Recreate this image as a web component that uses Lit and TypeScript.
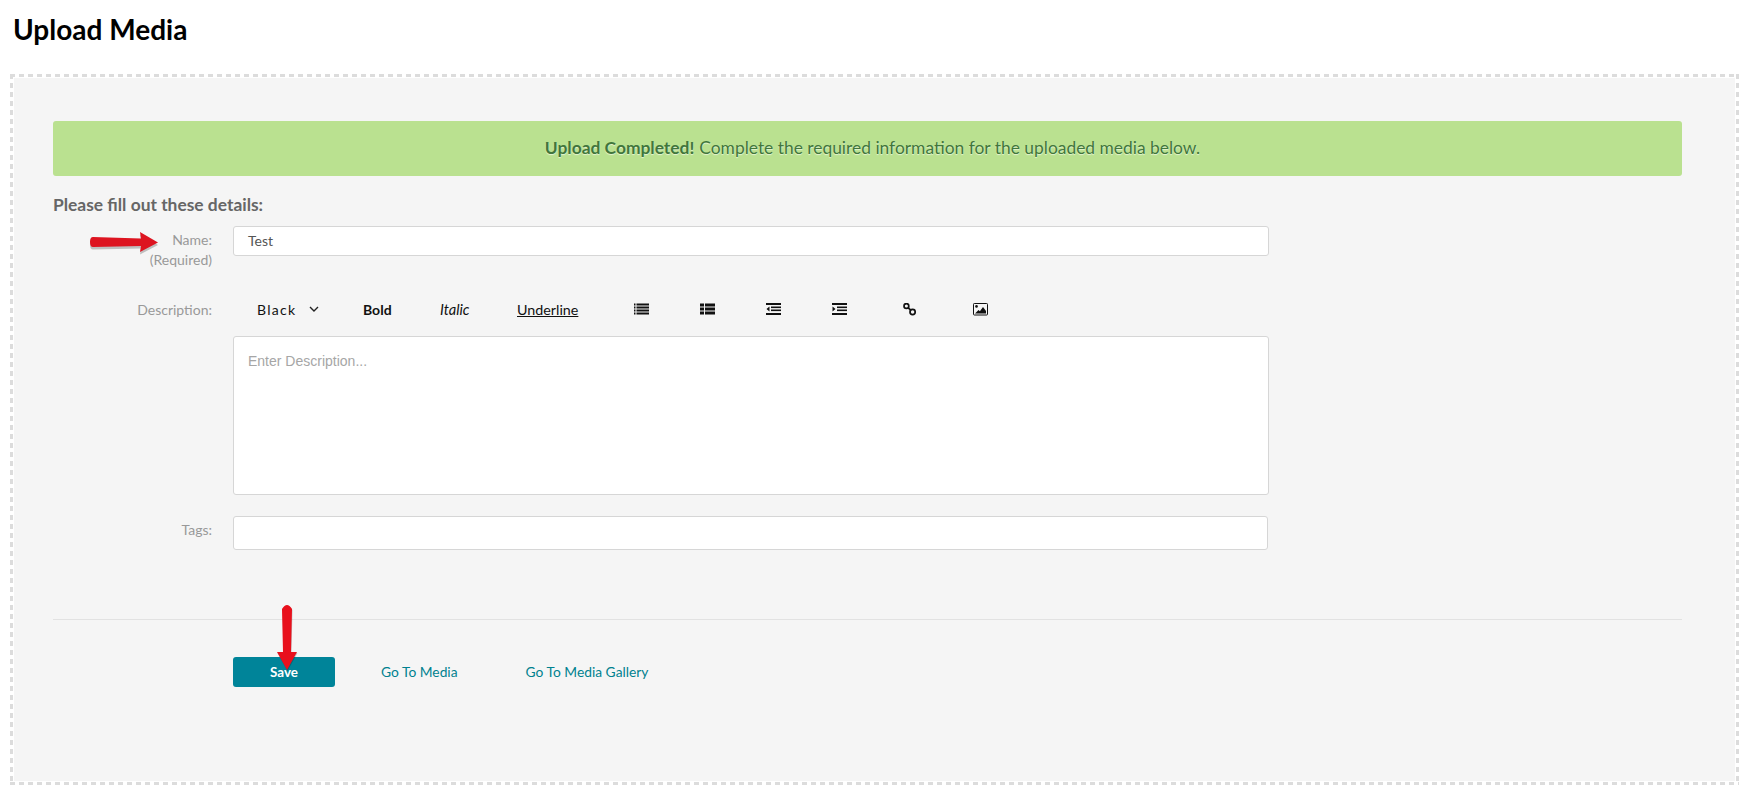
import { LitElement, html, css, svg } from "lit";
import { customElement } from "lit/decorators.js";

const icon = (body: unknown, cls = "") => html`<svg class="ico ${cls}" viewBox="0 0 15 13" width="15" height="13">${body}</svg>`;

const icons = [
  icon(svg`${[0.5, 3.5, 6.5, 9.5].map((y) => svg`<rect x="0" y=${y} width="1.5" height="2" fill="#111"/><rect x="2.5" y=${y} width="12.5" height="2" fill="#111"/>`)}`),
  icon(svg`<rect x="0" y="0.5" width="4" height="3" fill="#111"/><rect x="0" y="4.5" width="4" height="3" fill="#111"/><rect x="0" y="8.5" width="4" height="3" fill="#111"/><rect x="5" y="0.5" width="10" height="3" fill="#111"/><rect x="5" y="4.5" width="10" height="3" fill="#111"/><rect x="5" y="8.5" width="10" height="3" fill="#111"/>`),
  icon(svg`<rect x="0" y="0" width="15" height="2" fill="#111"/><rect x="5" y="3.5" width="10" height="1.6" fill="#111"/><rect x="5" y="6.5" width="10" height="1.6" fill="#111"/><rect x="0" y="10" width="15" height="2" fill="#111"/><path d="M3.5 3.5v5L0.5 6z" fill="#111"/>`),
  icon(svg`<rect x="0" y="0" width="15" height="2" fill="#111"/><rect x="5" y="3.5" width="10" height="1.6" fill="#111"/><rect x="5" y="6.5" width="10" height="1.6" fill="#111"/><rect x="0" y="10" width="15" height="2" fill="#111"/><path d="M0.5 3.5v5L3.5 6z" fill="#111"/>`, "after-indent"),
  icon(svg`<circle cx="3.4" cy="3" r="2.4" fill="none" stroke="#111" stroke-width="1.7"/><circle cx="9.6" cy="9" r="2.6" fill="none" stroke="#111" stroke-width="1.7"/><path d="M5 4.6L8 7.3" stroke="#111" stroke-width="1.8"/>`, "after-link"),
  icon(svg`<rect x="0.5" y="0.5" width="14" height="11.5" rx="0.8" fill="none" stroke="#111"/><circle cx="3.5" cy="3.4" r="1.3" fill="#111"/><path d="M2 10.5L5.5 7l1.4 1.2L10 4l3 4v2.5z" fill="#111"/>`),
];

@customElement("app-root")
export class AppRoot extends LitElement {
  static styles = css`
    :host {
      display: block;
      height: 788px;
      background: #fff;
      font-family: Lato, "Liberation Sans", sans-serif;
      overflow: hidden;
    }
    h1 {
      margin: 0;
      padding: 13px 0 0 13px;
      height: 74px;
      box-sizing: border-box;
      font-size: 28px;
      line-height: 32px;
      font-weight: 700;
      color: #000;
    }
    .panel {
      position: relative;
      box-sizing: border-box;
      margin-left: 10px;
      width: 1729px;
      height: 711px;
      padding: 4px;
      background:
        repeating-linear-gradient(90deg, #dcdcdc 0 5px, transparent 5px 9px) top left / 100% 3px no-repeat,
        repeating-linear-gradient(90deg, #dcdcdc 0 5px, transparent 5px 9px) bottom left / 100% 3px no-repeat,
        repeating-linear-gradient(180deg, #dcdcdc 0 5px, transparent 5px 9px) top left / 3px 100% no-repeat,
        repeating-linear-gradient(180deg, #dcdcdc 0 5px, transparent 5px 9px) top right / 3px 100% no-repeat;
    }
    .body {
      height: 100%;
      box-sizing: border-box;
      background: #f5f5f5;
      padding: 43px 53px 0 39px;
    }
    .banner {
      height: 55px;
      box-sizing: border-box;
      border-radius: 3px;
      background: #bae190;
      display: flex;
      align-items: center;
      justify-content: center;
      padding: 0 0 2px 10px;
      font-size: 17.4px;
      color: #41763c;
      text-shadow: 0 1px 1px #e6f5d4;
    }
    .banner b { font-weight: 700; margin-right: 5px; }
    h2 {
      margin: 19px 0 0;
      font-size: 17.4px;
      line-height: 20px;
      font-weight: 700;
      color: #666;
    }
    .grid {
      display: grid;
      grid-template-columns: 159px 1036px;
      column-gap: 21px;
      margin-top: 11px;
    }
    .label {
      font-size: 14px;
      line-height: 20px;
      color: #999;
      text-align: right;
    }
    .input {
      box-sizing: border-box;
      background: #fff;
      border: 1px solid #d6d6d6;
      border-radius: 3px;
      font-size: 14px;
      color: #555;
      display: flex;
      align-items: center;
      padding-left: 14px;
    }
    .name { height: 30px; padding-bottom: 2px; }
    .name-label { padding-top: 4px; height: 66px; box-sizing: border-box; }
    .desc-label { padding-top: 8px; }
    .toolbar {
      height: 44px;
      display: flex;
      align-items: center;
      font-size: 14px;
      color: #111;
      padding-bottom: 10px;
      box-sizing: border-box;
    }
    .color { width: 130px; padding-left: 24px; box-sizing: border-box; letter-spacing: 1.3px; display: flex; align-items: center; flex: none; }
    .color svg { margin-left: 13px; }
    .bold { font-weight: 700; width: 77px; flex: none; }
    .italic { font-style: italic; font-size: 14.6px; width: 77px; flex: none; }
    .under { text-decoration: underline; font-size: 14.3px; width: 117px; flex: none; }
    .ico { flex: none; margin-right: 51px; }
    .after-indent { margin-right: 56px; }
    .after-link { margin-right: 55px; }
    .area {
      height: 159px;
      align-items: flex-start;
      padding-top: 16px;
      color: #a6a6a6;
      font-family: "Liberation Sans", Arial, sans-serif;
      font-size: 14px;
      line-height: 16px;
    }
    .tags-label { padding-top: 25px; }
    .tags { height: 34px; width: 1035px; margin-top: 21px; }
    hr {
      border: 0;
      border-top: 1px solid #e2e2e2;
      margin: 69px 0 0;
    }
    .actions {
      display: flex;
      align-items: center;
      margin: 37px 0 0 180px;
      font-size: 13.8px;
      color: #00818f;
    }
    .save {
      width: 102px;
      height: 30px;
      border: 0;
      border-radius: 3px;
      background: #008499;
      color: #fff;
      font: 700 13.4px Lato, sans-serif;
      padding: 0;
    }
    .link1, .link2 { padding-bottom: 2px; }
    .link1 { margin-left: 46px; }
    .link2 { margin-left: 68px; }
    .arrow { position: absolute; overflow: visible; }
    .a1 { left: 79px; top: 158px; }
    .a2 { left: 266px; top: 529px; }
  `;

  render() {
    return html`
      <h1>Upload Media</h1>
      <section class="panel">
        <div class="body">
          <div class="banner"><b>Upload Completed!</b> Complete the required information for the uploaded media below.</div>
          <h2>Please fill out these details:</h2>
          <div class="grid">
            <div class="label name-label">Name:<br />(Required)</div>
            <div class="input name">Test</div>
            <div class="label desc-label">Description:</div>
            <div>
              <div class="toolbar">
                <span class="color">Black
                  <svg width="10" height="6" viewBox="0 0 10 6"><path d="M1 1l4 4 4-4" fill="none" stroke="#222" stroke-width="1.4"/></svg>
                </span>
                <span class="bold">Bold</span>
                <span class="italic">Italic</span>
                <span class="under">Underline</span>
                ${icons}
              </div>
              <div class="input area">Enter Description...</div>
            </div>
            <div class="label tags-label">Tags:</div>
            <div class="input tags"></div>
          </div>
          <hr />
          <div class="actions">
            <button class="save">Save</button>
            <span class="link1">Go To Media</span>
            <span class="link2">Go To Media Gallery</span>
          </div>
        </div>
        <svg class="arrow a1" width="70" height="22" viewBox="0 0 70 22">
          <path d="M4 5Q1 5 1 10Q1 15 4 15L52 14L51 20L69 10.5L51 0L52 6.5z" fill="#000" opacity=".22" transform="translate(0 2.5)"/>
          <path d="M4 5Q1 5 1 10Q1 15 4 15L52 14L51 20L69 10.5L51 0L52 6.5z" fill="#dd1420"/>
        </svg>
        <svg class="arrow a2" width="22" height="68" viewBox="0 0 22 68">
          <path d="M6 6Q11 -2 16 6L15 49L21 49L11 67L1 49L7 49z" fill="#000" opacity=".2" transform="translate(0.5 1)"/>
          <path d="M6 6Q11 -2 16 6L15 49L21 49L11 67L1 49L7 49z" fill="#e8101c"/>
        </svg>
      </section>
    `;
  }
}
